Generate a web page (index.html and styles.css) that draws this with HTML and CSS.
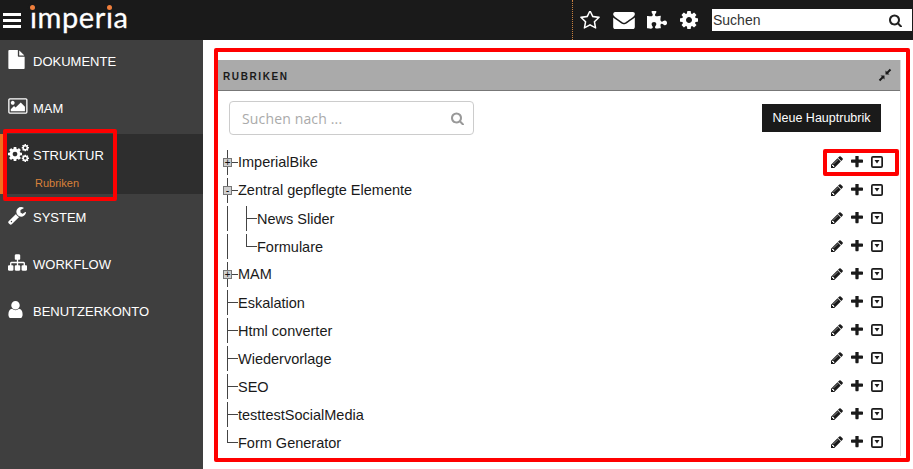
FILE: index.html
```html
<!DOCTYPE html>
<html lang="de">
<head>
    <meta charset="UTF-8">
    <title>imperia</title>
    <link rel="stylesheet" href="styles.css">
</head>
<body>
    <!-- icon sprite -->
    <svg class="sprite" xmlns="http://www.w3.org/2000/svg">
        <symbol id="i-file" viewBox="0 0 1536 1792"><path d="M1024 512v-472q22 14 36 28l408 408q14 14 28 36h-472zm-128 32q0 40 28 68t68 28h544v1056q0 40-28 68t-68 28h-1344q-40 0-68-28t-28-68v-1600q0-40 28-68t68-28h800v544z"/></symbol>
        <symbol id="i-picture" viewBox="0 0 1920 1792"><path d="M576 576q0 80-56 136t-136 56-136-56-56-136 56-136 136-56 136 56 56 136zm1024 384v448h-1408v-192l320-320 160 160 512-512zm96-704h-1600q-13 0-22.5 9.5t-9.5 22.5v1216q0 13 9.5 22.5t22.5 9.5h1600q13 0 22.5-9.5t9.5-22.5v-1216q0-13-9.5-22.5t-22.5-9.5zm160 32v1216q0 66-47 113t-113 47h-1600q-66 0-113-47t-47-113v-1216q0-66 47-113t113-47h1600q66 0 113 47t47 113z"/></symbol>
        <symbol id="i-cog" viewBox="128 128 1536 1536"><path d="M1152 896q0-106-75-181t-181-75-181 75-75 181 75 181 181 75 181-75 75-181zm512-109v222q0 12-8 23t-20 13l-185 28q-19 54-39 91 35 50 107 138 10 12 10 25t-9 23q-27 37-99 108t-94 71q-12 0-26-9l-138-108q-44 23-91 38-16 136-29 186-7 28-36 28h-222q-14 0-24.5-8.5t-11.5-21.5l-28-184q-49-16-90-37l-141 107q-10 9-25 9-14 0-25-11-126-114-165-168-7-10-7-23 0-12 8-23 15-21 51-66.5t54-70.5q-27-50-41-99l-183-27q-13-2-21-12.5t-8-23.5v-222q0-12 8-23t19-13l186-28q14-46 39-92-40-57-107-138-10-12-10-24 0-10 9-23 26-36 98.5-107.5t94.5-71.5q13 0 26 10l138 107q44-23 91-38 16-136 29-186 7-28 36-28h222q14 0 24.5 8.5t11.5 21.5l28 184q49 16 90 37l142-107q9-9 24-9 13 0 25 10 129 119 165 170 7 8 7 22 0 12-8 23-15 21-51 66.5t-54 70.5q26 50 41 98l183 28q13 2 21 12.5t8 23.5z"/></symbol>
        <symbol id="i-wrench" viewBox="64 128 1664 1664"><path d="M448 1472q0-26-19-45t-45-19-45 19-19 45 19 45 45 19 45-19 19-45zm644-420l-682 682q-37 37-90 37-52 0-91-37l-106-108q-38-36-38-90 0-53 38-91l681-681q39 98 114.5 173.5t173.5 114.5zm634-435q0 39-23 106-47 134-164.5 217.5t-258.5 83.5q-185 0-316.5-131.5t-131.5-316.5 131.5-316.5 316.5-131.5q58 0 121.5 16.5t107.5 46.5q16 11 16 28t-16 28l-293 169v224l193 107q5-3 79-48.5t135.5-81 70.5-35.5q15 0 23.5 10t8.5 25z"/></symbol>
        <symbol id="i-sitemap" viewBox="0 0 1792 1792"><path d="M1792 1248v320q0 40-28 68t-68 28h-320q-40 0-68-28t-28-68v-320q0-40 28-68t68-28h96v-192h-512v192h96q40 0 68 28t28 68v320q0 40-28 68t-68 28h-320q-40 0-68-28t-28-68v-320q0-40 28-68t68-28h96v-192h-512v192h96q40 0 68 28t28 68v320q0 40-28 68t-68 28h-320q-40 0-68-28t-28-68v-320q0-40 28-68t68-28h96v-192q0-52 38-90t90-38h512v-192h-96q-40 0-68-28t-28-68v-320q0-40 28-68t68-28h320q40 0 68 28t28 68v320q0 40-28 68t-68 28h-96v192h512q52 0 90 38t38 90v192h96q40 0 68 28t28 68z"/></symbol>
        <symbol id="i-user" viewBox="256 128 1280 1536"><path d="M1536 1399q0 109-62.5 187t-150.5 78h-854q-88 0-150.5-78t-62.5-187q0-85 8.5-160.5t31.5-152 58.5-131 94-89 134.5-34.5q131 128 313 128t313-128q76 0 134.5 34.5t94 89 58.5 131 31.5 152 8.5 160.5zm-256-887q0 159-112.5 271.5t-271.5 112.5-271.5-112.5-112.5-271.5 112.5-271.5 271.5-112.5 271.5 112.5 112.5 271.5z"/></symbol>
        <symbol id="i-star" viewBox="64 128 1664 1600"><path d="M1201 1004l306-297-422-62-189-382-189 382-422 62 306 297-73 421 378-199 377 199zm527-357q0 22-26 48l-363 354 86 500q1 7 1 20 0 50-41 50-19 0-40-12l-449-236-449 236q-22 12-40 12-21 0-31.5-14.5t-10.5-35.5q0-6 2-20l86-500-364-354q-25-27-25-48 0-37 56-46l502-73 225-455q19-41 49-41t49 41l225 455 502 73q56 9 56 46z"/></symbol>
        <symbol id="i-envelope" viewBox="0 256 1792 1408"><path d="M1792 710v794q0 66-47 113t-113 47h-1472q-66 0-113-47t-47-113v-794q44 49 101 87 362 246 497 345 57 42 92.5 65.5t94.5 48 110 24.5h2q51 0 110-24.5t94.5-48 92.5-65.5q170-123 498-345 57-39 100-87zm0-294q0 79-49 151t-122 123q-376 261-468 325-10 7-42.5 30.5t-54 38-52 32.5-57.5 27-50 9h-2q-23 0-50-9t-57.5-27-52-32.5-54-38-42.5-30.5q-91-64-262-182.5t-205-142.5q-62-42-117-115.5t-55-136.5q0-78 41.5-130t118.5-52h1472q65 0 112.5 47t47.5 113z"/></symbol>
        <symbol id="i-puzzle" viewBox="0 128 1664 1536"><path d="M1664 1098q0 81-44.5 135t-123.5 54q-41 0-77.5-17.5t-59-38-56.5-38-71-17.5q-110 0-110 124 0 39 16 115t15 115v5q-22 0-33 1-34 3-97.5 11.5t-115.5 13.5-98 5q-61 0-103-26.5t-42-83.5q0-37 17.5-71t38-56.5 38-59 17.5-77.5q0-79-54-123.5t-135-44.5q-84 0-143 45.5t-59 127.5q0 43 15 83t33.5 64.5 33.5 53 15 50.5q0 45-46 89-37 35-117 35-95 0-245-24-9-2-27.5-4t-27.5-4l-13-2q-1 0-3-1-2 0-2-1v-1024q2 1 17.5 3.5t34 5 21.5 3.5q150 24 245 24 80 0 117-35 46-44 46-89 0-22-15-50.5t-33.5-53-33.5-64.5-15-83q0-82 59-127.5t144-45.5q80 0 134 44.5t54 123.5q0 41-17.5 77.5t-38 59-38 56.5-17.5 71q0 57 42 83.5t103 26.5q64 0 180-15t163-17v2q-1 2-3.5 17.5t-5 34-3.5 21.5q-24 150-24 245 0 80 35 117 44 46 89 46 22 0 50.5-15t53-33.5 64.5-33.5 83-15q82 0 127.5 59t45.5 143z"/></symbol>
        <symbol id="i-search" viewBox="64 64 1664 1664"><path d="M1216 832q0-185-131.5-316.5t-316.5-131.5-316.5 131.5-131.5 316.5 131.5 316.5 316.5 131.5 316.5-131.5 131.5-316.5zm512 832q0 52-38 90t-90 38q-54 0-90-38l-343-342q-179 124-399 124-143 0-273.5-55.5t-225-150-150-225-55.5-273.5 55.5-273.5 150-225 225-150 273.5-55.5 273.5 55.5 225 150 150 225 55.5 273.5q0 220-124 399l343 343q37 37 37 90z"/></symbol>
        <symbol id="i-pencil" viewBox="128 128 1536 1536"><path d="M491 1536l91-91-235-235-91 91v107h128v128h107zm523-928q0-22-22-22-10 0-17 7l-542 542q-7 7-7 17 0 22 22 22 10 0 17-7l542-542q7-7 7-17zm-54-192l416 416-832 832h-416v-416zm683 96q0 53-37 90l-166 166-416-416 166-165q36-38 90-38 53 0 91 38l235 234q37 39 37 91z"/></symbol>
        <symbol id="i-plus" viewBox="192 192 1408 1408"><path d="M1600 736v192q0 40-28 68t-68 28h-416v416q0 40-28 68t-68 28h-192q-40 0-68-28t-28-68v-416h-416q-40 0-68-28t-28-68v-192q0-40 28-68t68-28h416v-416q0-40 28-68t68-28h192q40 0 68 28t28 68v416h416q40 0 68 28t28 68z" transform="translate(0 -32)"/></symbol>
        <symbol id="i-caret" viewBox="0 0 12 12"><path d="M2 0h8a2 2 0 0 1 2 2v8a2 2 0 0 1-2 2H2a2 2 0 0 1-2-2V2a2 2 0 0 1 2-2zM1.700 1.700v8.600h8.600V1.700zM3.500 4h5L6 7.400z" fill-rule="evenodd"/></symbol>
        <symbol id="i-compress" viewBox="0 0 14 14"><path d="M7.500 2.500V6.500H11.500L10.200 5.200 13.200 2.200 11.800.8 8.800 3.800zM6.500 11.500V7.500H2.500L3.800 8.800 .8 11.800 2.200 13.200 5.200 10.200z"/></symbol>
    </svg>

    <header class="topbar">
        <div class="hamburger"><span></span><span></span><span></span></div>
        <div class="logo">imperia<i class="logo-dot dot-a"></i><i class="logo-dot dot-b"></i></div>
        <div class="topbar-tools">
            <svg class="tool tool-star"><use href="#i-star"/></svg>
            <svg class="tool tool-mail"><use href="#i-envelope"/></svg>
            <svg class="tool tool-puzzle"><use href="#i-puzzle"/></svg>
            <svg class="tool tool-cog"><use href="#i-cog"/></svg>
            <div class="top-search">
                <span>Suchen</span>
                <svg><use href="#i-search"/></svg>
            </div>
        </div>
    </header>

    <div class="page">
        <nav class="sidebar">
            <div class="nav-item">
                <div class="nav-line"><span class="nav-icon"><svg class="ic-file"><use href="#i-file"/></svg></span>DOKUMENTE</div>
            </div>
            <div class="nav-item">
                <div class="nav-line"><span class="nav-icon"><svg class="ic-picture"><use href="#i-picture"/></svg></span>MAM</div>
            </div>
            <div class="nav-item active">
                <div class="nav-line">
                    <span class="nav-icon">
                        <svg class="ic-cogs" viewBox="0 0 21 18">
                            <use href="#i-cog" x="0" y="3" width="14" height="14"/>
                            <use href="#i-cog" x="13.500" y="0" width="7.500" height="7.500"/>
                            <use href="#i-cog" x="13.500" y="10.500" width="7.500" height="7.500"/>
                        </svg>
                    </span>STRUKTUR
                </div>
                <div class="nav-sub">Rubriken</div>
            </div>
            <div class="nav-item">
                <div class="nav-line"><span class="nav-icon"><svg class="ic-wrench"><use href="#i-wrench"/></svg></span>SYSTEM</div>
            </div>
            <div class="nav-item">
                <div class="nav-line"><span class="nav-icon"><svg class="ic-sitemap"><use href="#i-sitemap"/></svg></span>WORKFLOW</div>
            </div>
            <div class="nav-item">
                <div class="nav-line"><span class="nav-icon"><svg class="ic-user"><use href="#i-user"/></svg></span>BENUTZERKONTO</div>
            </div>
        </nav>

        <main class="content">
            <section class="panel">
                <div class="panel-head">
                    <span>RUBRIKEN</span>
                    <svg><use href="#i-compress"/></svg>
                </div>
                <div class="panel-tools">
                    <div class="search-field">
                        <span>Suchen nach ...</span>
                        <svg><use href="#i-search"/></svg>
                    </div>
                    <button class="btn-new">Neue Hauptrubrik</button>
                </div>
                <ul class="tree">
                    <li class="row"><i class="joint"><b class="toggle">+</b></i><span class="label">ImperialBike</span><span class="actions"><svg><use href="#i-pencil"/></svg><svg><use href="#i-plus"/></svg><svg><use href="#i-caret"/></svg></span></li>
                    <li class="row"><i class="joint"><b class="toggle">-</b></i><span class="label">Zentral gepflegte Elemente</span><span class="actions"><svg><use href="#i-pencil"/></svg><svg><use href="#i-plus"/></svg><svg><use href="#i-caret"/></svg></span></li>
                    <li class="row"><i class="pipe"></i><i class="joint"></i><span class="label">News Slider</span><span class="actions"><svg><use href="#i-pencil"/></svg><svg><use href="#i-plus"/></svg><svg><use href="#i-caret"/></svg></span></li>
                    <li class="row"><i class="pipe"></i><i class="joint last"></i><span class="label">Formulare</span><span class="actions"><svg><use href="#i-pencil"/></svg><svg><use href="#i-plus"/></svg><svg><use href="#i-caret"/></svg></span></li>
                    <li class="row"><i class="joint"><b class="toggle">+</b></i><span class="label">MAM</span><span class="actions"><svg><use href="#i-pencil"/></svg><svg><use href="#i-plus"/></svg><svg><use href="#i-caret"/></svg></span></li>
                    <li class="row"><i class="joint"></i><span class="label">Eskalation</span><span class="actions"><svg><use href="#i-pencil"/></svg><svg><use href="#i-plus"/></svg><svg><use href="#i-caret"/></svg></span></li>
                    <li class="row"><i class="joint"></i><span class="label">Html converter</span><span class="actions"><svg><use href="#i-pencil"/></svg><svg><use href="#i-plus"/></svg><svg><use href="#i-caret"/></svg></span></li>
                    <li class="row"><i class="joint"></i><span class="label">Wiedervorlage</span><span class="actions"><svg><use href="#i-pencil"/></svg><svg><use href="#i-plus"/></svg><svg><use href="#i-caret"/></svg></span></li>
                    <li class="row"><i class="joint"></i><span class="label">SEO</span><span class="actions"><svg><use href="#i-pencil"/></svg><svg><use href="#i-plus"/></svg><svg><use href="#i-caret"/></svg></span></li>
                    <li class="row"><i class="joint"></i><span class="label">testtestSocialMedia</span><span class="actions"><svg><use href="#i-pencil"/></svg><svg><use href="#i-plus"/></svg><svg><use href="#i-caret"/></svg></span></li>
                    <li class="row"><i class="joint last"></i><span class="label">Form Generator</span><span class="actions"><svg><use href="#i-pencil"/></svg><svg><use href="#i-plus"/></svg><svg><use href="#i-caret"/></svg></span></li>
                </ul>
            </section>
        </main>
    </div>

    <!-- red marker boxes drawn over the screenshot -->
    <div class="marker marker-panel"></div>
    <div class="marker marker-nav"></div>
    <div class="marker marker-actions"></div>
</body>
</html>
```

FILE: styles.css
```css
html, body {
    height: 100%;
}

body {
    margin: 0;
    overflow: hidden;
    background: white;
    color: #1a1a1a;
    font-family: "Liberation Sans", Arial, sans-serif;
}

.sprite {
    display: none;
}

svg {
    display: block;
    fill: currentColor;
}

/* top bar */
.topbar {
    display: flex;
    align-items: center;
    height: 40px;
    background: #1a1a1a;
    color: white;
}

.hamburger {
    display: flex;
    flex-direction: column;
    gap: 3px;
    width: 18px;
    margin-left: 3px;
}

.hamburger span {
    height: 3px;
    background: white;
}

.logo {
    position: relative;
    margin-left: 9px;
    font-family: Lato, sans-serif;
    font-size: 29px;
    line-height: 34px;
    letter-spacing: 0.6px;
    height: 40px;
    -webkit-text-stroke: 0.3px white;
}

.logo-dot {
    position: absolute;
    top: 5px;
    width: 5px;
    height: 5px;
    border-radius: 50%;
    background: #f07f3c;
    box-shadow: 0 0 0 2px #1a1a1a;
}

.dot-a {
    left: 0;
}

.dot-b {
    left: 77px;
}

.topbar-tools {
    display: flex;
    align-items: center;
    height: 40px;
    margin-left: auto;
    margin-right: 1px;
    border-left: 1px dotted #c9803f;
    padding-left: 7px;
}

.tool-star {
    width: 20px;
    height: 19px;
    margin-right: 13px;
}

.tool-mail {
    width: 22px;
    height: 17px;
    margin-right: 12px;
}

.tool-puzzle {
    width: 20px;
    height: 19px;
    margin-right: 13px;
}

.tool-cog {
    width: 18px;
    height: 18px;
    margin-right: 14px;
}

.top-search {
    display: flex;
    align-items: center;
    justify-content: space-between;
    width: 200px;
    height: 22px;
    padding: 0 10px 0 1px;
    box-sizing: border-box;
    background: white;
    color: #333;
    font-size: 14px;
}

.top-search svg {
    width: 13px;
    height: 13px;
    color: #222;
}

/* sidebar */
.page {
    display: flex;
    height: 429px;
}

.sidebar {
    flex: none;
    width: 203px;
    background: #3f3f3f;
    color: white;
    font-size: 13px;
}

.nav-item {
    height: 47px;
    padding: 0 0 0 8px;
    box-sizing: border-box;
}

.nav-item.active {
    height: 60px;
    padding-left: 5px;
    border-left: 3px solid #f07020;
    background: #2e2e2e;
}

.nav-line {
    display: flex;
    align-items: center;
    height: 42px;
}

.active ~ .nav-item .nav-line {
    height: 46px;
}

.nav-icon {
    display: flex;
    align-items: center;
    width: 25px;
    margin-top: -4px;
}

.ic-file {
    width: 17px;
    height: 19px;
}

.ic-picture {
    width: 21px;
    height: 18px;
}

.ic-cogs {
    width: 21px;
    height: 18px;
}

.ic-wrench {
    width: 18px;
    height: 18px;
    margin-top: 2px;
}

.ic-sitemap {
    width: 19px;
    height: 19px;
}

.ic-user {
    width: 15px;
    height: 17px;
}

.nav-sub {
    padding: 1px 0 0 27px;
    color: #d9813a;
    font-size: 11px;
}

/* main panel */
.content {
    flex: 1;
    padding: 20px 12px 0 15px;
    min-width: 0;
}

.panel {
    border-right: 1px solid #ddd;
}

.panel-head {
    display: flex;
    align-items: center;
    justify-content: space-between;
    height: 30px;
    padding: 0 8px 0 5px;
    background: #aaaaaa;
    border-bottom: 1px solid #777;
    font-size: 10px;
    font-weight: bold;
    letter-spacing: 1.6px;
}

.panel-head span {
    padding-top: 2px;
}

.panel-head svg {
    width: 14px;
    height: 14px;
    color: #1a1a1a;
}

.panel-tools {
    display: flex;
    align-items: center;
    justify-content: space-between;
    padding: 10px 19px 13px 11px;
}

.search-field {
    display: flex;
    align-items: center;
    justify-content: space-between;
    width: 245px;
    height: 34px;
    padding: 0 9px 0 12px;
    box-sizing: border-box;
    border: 1px solid #ccc;
    border-radius: 4px;
    color: #aaa;
    font-family: "Open Sans", sans-serif;
    font-size: 14px;
    letter-spacing: 0.15px;
}

.search-field svg {
    width: 13px;
    height: 13px;
    color: #999;
}

.btn-new {
    width: 119px;
    height: 28px;
    padding: 0;
    border: 0;
    background: #1a1a1a;
    color: white;
    font-family: "Liberation Sans", Arial, sans-serif;
    font-size: 12.500px;
}

/* tree */
.tree {
    margin: 0;
    padding: 0 17px 0 9px;
    list-style: none;
    font-size: 14.500px;
}

.row {
    display: flex;
    align-items: center;
    height: 28px;
}

.pipe {
    position: relative;
    width: 19px;
    height: 28px;
}

.pipe::before {
    content: '';
    position: absolute;
    left: 0;
    top: 2px;
    height: 25px;
    width: 1px;
    background: #444;
}

.joint {
    position: relative;
    flex: none;
    width: 11px;
    height: 28px;
}

.joint::before {
    content: '';
    position: absolute;
    left: 0;
    top: 2px;
    height: 25px;
    width: 1px;
    background: #444;
}

.joint::after {
    content: '';
    position: absolute;
    left: 0;
    top: 14px;
    width: 11px;
    height: 1px;
    background: #444;
}

.joint.last::before {
    height: 13px;
}

.toggle {
    position: absolute;
    z-index: 1;
    left: -4px;
    top: 10px;
    width: 9px;
    height: 9px;
    box-sizing: border-box;
    border: 1px solid #777;
    background: #cfcfcf;
    color: #111;
    font-size: 10px;
    line-height: 7px;
    font-weight: normal;
    text-align: center;
}

.label {
    white-space: nowrap;
}

/* rows without a toggle sit a pixel lower */
.joint:empty + .label {
    padding-top: 2px;
}

.actions {
    display: flex;
    align-items: center;
    gap: 8px;
    margin-left: auto;
}

.actions svg {
    width: 12px;
    height: 12px;
}

/* red markers over the page */
.marker {
    position: absolute;
    box-sizing: border-box;
    border: 4px solid #ff0000;
    border-radius: 2px;
}

.marker-panel {
    left: 214px;
    top: 48px;
    width: 696px;
    height: 414px;
}

.marker-nav {
    left: 3px;
    top: 129px;
    width: 114px;
    height: 72px;
}

.marker-actions {
    left: 823px;
    top: 149px;
    width: 76px;
    height: 27px;
}
```
